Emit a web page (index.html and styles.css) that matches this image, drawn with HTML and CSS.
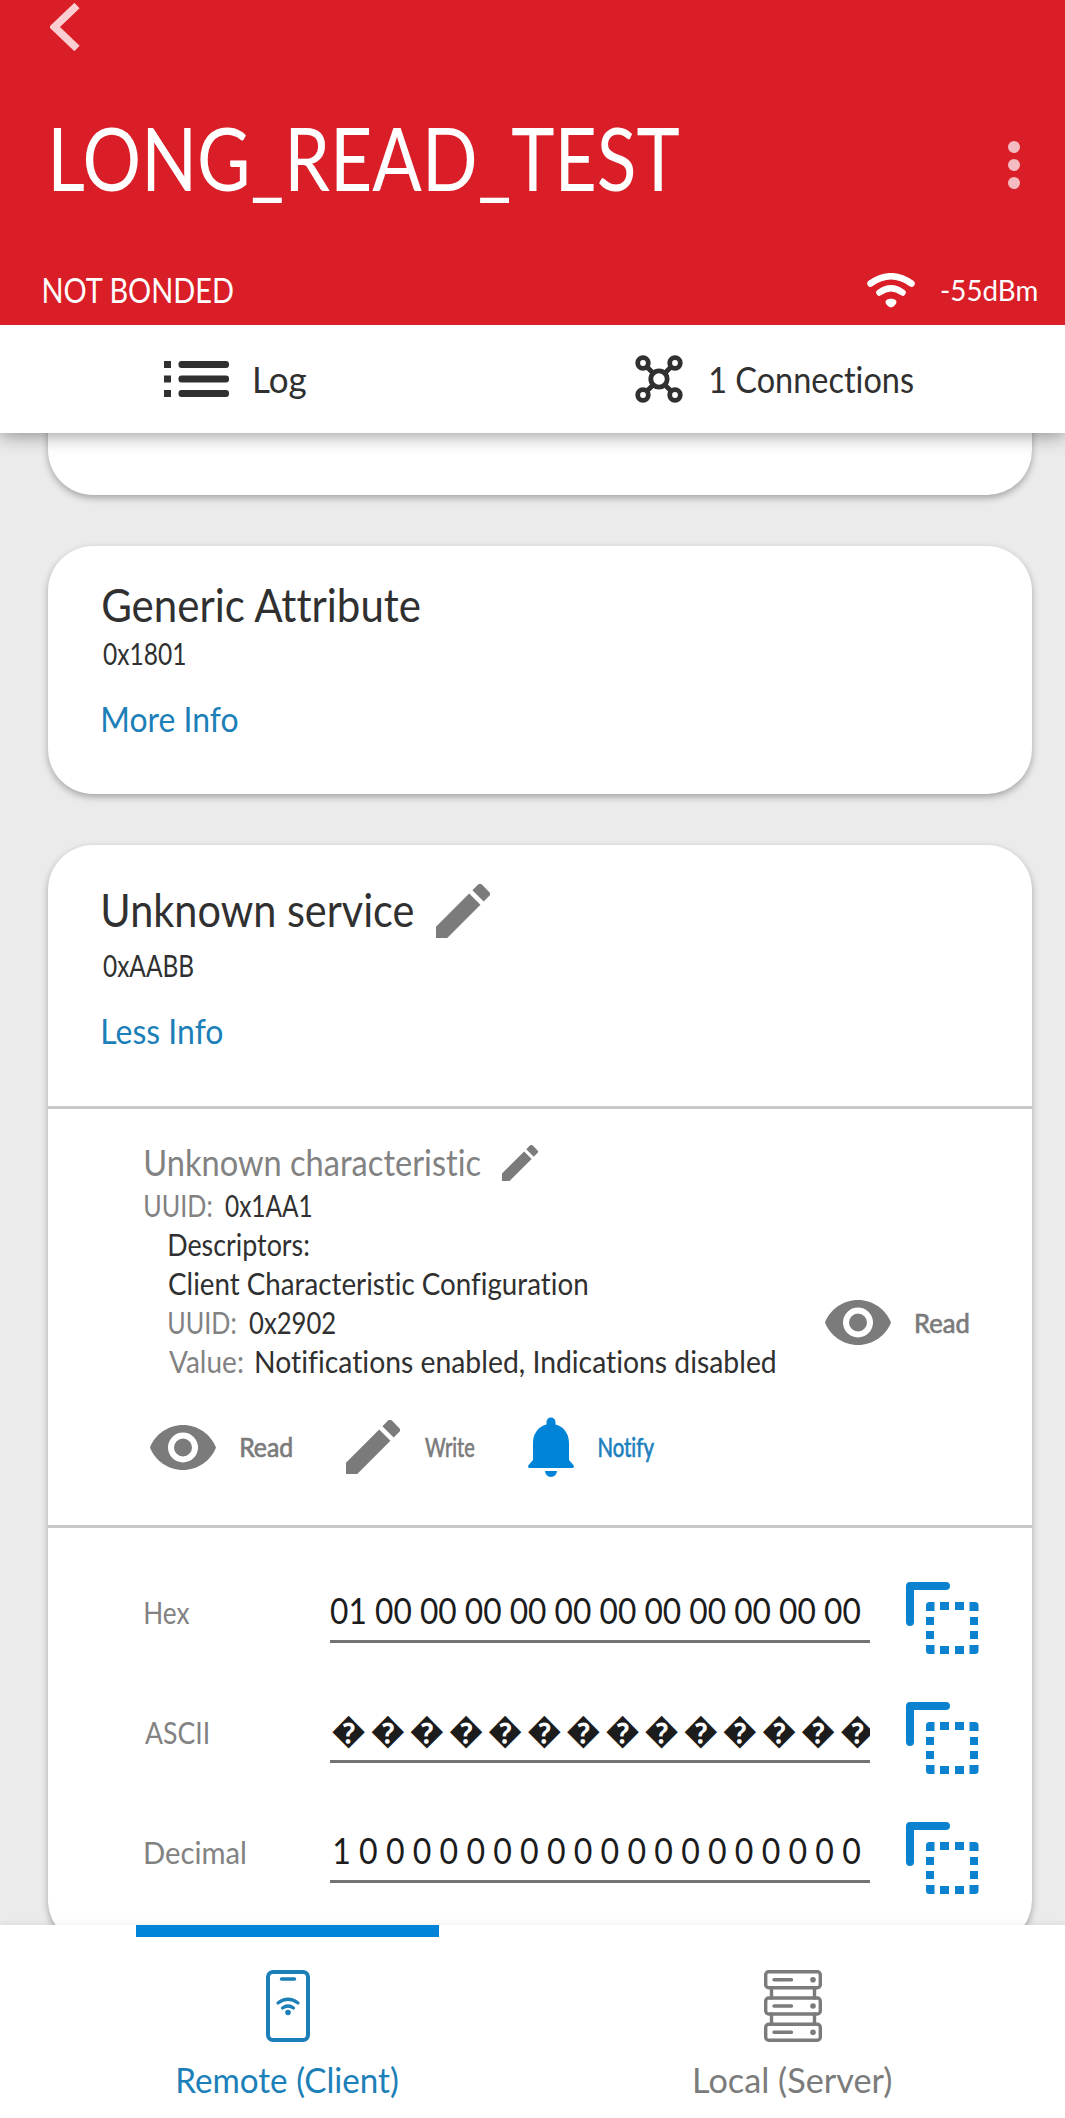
FILE: index.html
```html
<!DOCTYPE html>
<html lang="en">
<head>
<meta charset="utf-8">
<title>LONG_READ_TEST</title>
<link rel="stylesheet" href="styles.css">
</head>
<body>
<svg class="sprite" aria-hidden="true">
  <symbol id="pencil" viewBox="3 3 18 18"><path d="M3 17.25V21h3.75L17.81 9.94l-3.75-3.75L3 17.25zM20.71 7.04a1 1 0 0 0 0-1.41l-2.34-2.34a1 1 0 0 0-1.41 0l-1.83 1.83 3.75 3.75 1.83-1.83z"/></symbol>
  <symbol id="eye" viewBox="1 4.5 22 15"><path d="M12 4.5C7 4.5 2.73 7.61 1 12c1.73 4.39 6 7.5 11 7.5s9.27-3.11 11-7.5c-1.73-4.39-6-7.5-11-7.5zM12 17a5 5 0 1 1 0-10 5 5 0 0 1 0 10zm0-8a3 3 0 1 0 0 6 3 3 0 0 0 0-6z"/></symbol>
  <symbol id="copy" viewBox="0 0 73 72">
    <path d="M4 40V4h36" fill="none" stroke="currentColor" stroke-width="8" stroke-linecap="round" stroke-linejoin="round"/>
    <path d="M20 29v-5.500a3.500 3.500 0 0 1 3.500-3.500H28.500v9zM63.500 20H69a3.500 3.500 0 0 1 3.500 3.500V29h-9zM20 63v5.500a3.500 3.500 0 0 0 3.500 3.500H28.500v-9zM63.500 72H69a3.500 3.500 0 0 0 3.500-3.500V63h-9z"/>
    <path d="M34 20h9v8h-9zM49 20h9v8h-9zM34 64h9v8h-9zM49 64h9v8h-9zM20 35h8v8h-8zM20 49h8v8h-8zM64 35h8v8h-8zM64 49h8v8h-8z"/>
  </symbol>
</svg>
<div class="app">
  <header class="header">
    <svg class="back" width="30" height="48" viewBox="0 0 30 48"><path d="M27 2.500 4.500 24 27 45.500" fill="none" stroke="currentColor" stroke-width="7.500"/></svg>
    <div class="title-row">
      <h1 class="title fit" data-fit="625">LONG_READ_TEST</h1>
      <svg class="more" width="12" height="48" viewBox="0 0 12 48"><circle cx="6" cy="6" r="6"/><circle cx="6" cy="24" r="6"/><circle cx="6" cy="42" r="6"/></svg>
    </div>
    <div class="status-row">
      <span class="bond fit" data-fit="190">NOT BONDED</span>
      <svg class="wifi" width="48" height="35" viewBox="0 0 48 35"><g fill="none" stroke="currentColor" stroke-linecap="round" stroke-width="6.500"><path d="M3.500 10.500Q24-4 44.500 10.500"/><path d="M12.500 19.500Q24 11 35.500 19.500"/></g><path d="M18.500 29c0-4.500 11-4.500 11 0 0 2.500-4 5.500-5.500 5.500s-5.500-3-5.500-5.500z"/></svg>
      <span class="rssi fit" data-fit="96">-55dBm</span>
    </div>
  </header>

  <nav class="toolbar">
    <a class="tool tool-log">
      <svg width="65" height="36" viewBox="0 0 65 36"><path d="M0 0h7v7H0zM0 14.500h7v7H0zM0 29h7v7H0z"/><rect x="14.500" width="50.500" height="7" rx="3"/><rect x="14.500" y="14.500" width="50.500" height="7" rx="3"/><rect x="14.500" y="29" width="50.500" height="7" rx="3"/></svg>
      <span class="fit" data-fit="51">Log</span>
    </a>
    <a class="tool tool-conn">
      <svg width="48" height="48" viewBox="0 0 48 48"><g fill="none" stroke="currentColor" stroke-width="4.800"><path d="M12 12l6 6M36 12l-6 6M12 36l6-6M36 36l-6-6"/><circle cx="8" cy="8" r="5.300"/><circle cx="40" cy="8" r="5.300"/><circle cx="8" cy="40" r="5.300"/><circle cx="40" cy="40" r="5.300"/><circle cx="24" cy="24" r="8.200"/></g></svg>
      <span class="fit" data-fit="204">1 Connections</span>
    </a>
  </nav>

  <main class="services">
    <section class="card">
      <a class="link fit" data-fit="134.500">More Info</a>
    </section>

    <section class="card">
      <h2 class="service-name fit" data-fit="316.500">Generic Attribute</h2>
      <div class="uuid fit" data-fit="82">0x1801</div>
      <a class="link fit" data-fit="134.500">More Info</a>
    </section>

    <section class="card card-open">
      <div class="card-head">
        <div class="name-row">
          <h2 class="service-name fit" data-fit="310">Unknown service</h2>
          <svg class="icon" width="54" height="54"><use href="#pencil"/></svg>
        </div>
        <div class="uuid uuid-open fit" data-fit="90.500">0xAABB</div>
        <a class="link fit" data-fit="119.500">Less Info</a>
      </div>

      <div class="characteristic">
        <div class="char-row">
          <h3 class="char-name fit" data-fit="336.500">Unknown characteristic</h3>
          <svg class="icon" width="36" height="36"><use href="#pencil"/></svg>
        </div>
        <div class="line"><span class="key fit" data-fit="66.500">UUID:</span><span class="fit" data-fit="86.500">0x1AA1</span></div>
        <div class="descriptors">
          <div class="line"><span class="fit" data-fit="139.500">Descriptors:</span></div>
          <div class="descriptor">
            <div class="descriptor-text">
              <div class="line"><span class="fit" data-fit="418.500">Client Characteristic Configuration</span></div>
              <div class="line"><span class="key fit" data-fit="66.500">UUID:</span><span class="fit" data-fit="86">0x2902</span></div>
              <div class="line"><span class="key fit" data-fit="73.500">Value:</span><span class="fit" data-fit="520">Notifications enabled, Indications disabled</span></div>
            </div>
            <div class="action">
              <svg class="icon" width="66" height="45"><use href="#eye"/></svg>
              <span class="fit" data-fit="52">Read</span>
            </div>
          </div>
        </div>
        <div class="actions">
          <div class="action">
            <svg class="icon" width="66" height="45"><use href="#eye"/></svg>
            <span class="fit" data-fit="50.500">Read</span>
          </div>
          <div class="action">
            <svg class="icon" width="54" height="54"><use href="#pencil"/></svg>
            <span class="fit" data-fit="49">Write</span>
          </div>
          <div class="action action-on">
            <svg class="icon" width="46" height="60" viewBox="0 0 46 60"><path d="M18.500 5a4.500 4.500 0 0 1 9 0v2.500C36 9.500 41 17 41 26v17l4 4.500c2 2.500.5 3.500-1.500 3.500h-41C.5 51-1 50 1 47.500L5 43V26C5 17 10 9.500 18.500 7.500zM17 54h12a6 6 0 0 1-12 0z"/></svg>
            <span class="fit" data-fit="55.500">Notify</span>
          </div>
        </div>
      </div>

      <div class="values">
        <div class="value-row">
          <span class="label"><span class="fit" data-fit="44.500">Hex</span></span>
          <div class="field"><span class="fit" data-fit="529">01 00 00 00 00 00 00 00 00 00 00 00</span></div>
          <svg class="copy" width="73" height="72"><use href="#copy"/></svg>
        </div>
        <div class="value-row">
          <span class="label"><span class="fit" data-fit="63">ASCII</span></span>
          <div class="field field-ascii"><span class="fit" data-fit="542">��������������</span></div>
          <svg class="copy" width="73" height="72"><use href="#copy"/></svg>
        </div>
        <div class="value-row">
          <span class="label"><span class="fit" data-fit="100">Decimal</span></span>
          <div class="field field-dec"><span class="fit" data-fit="526">1 0 0 0 0 0 0 0 0 0 0 0 0 0 0 0 0 0 0 0</span></div>
          <svg class="copy" width="73" height="72"><use href="#copy"/></svg>
        </div>
      </div>
    </section>
  </main>

  <nav class="tabs">
    <a class="tab tab-active">
      <svg width="44" height="72" viewBox="0 0 44 72"><g fill="none" stroke="currentColor" stroke-width="4" stroke-linecap="round"><rect x="2" y="2" width="40" height="68" rx="5"/><path d="M15.500 9h13" stroke-width="3.500"/><path d="M12 33q10-7.500 20 0M16.500 38q5.500-4 11 0" stroke-width="3.200"/></g><circle cx="22" cy="42.500" r="2.800"/></svg>
      <span class="fit" data-fit="219.500">Remote (Client)</span>
    </a>
    <a class="tab">
      <svg width="58" height="72" viewBox="0 0 58 72"><g fill="none" stroke="currentColor" stroke-width="3.400" stroke-linecap="round"><rect x="1.700" y="1.700" width="54.600" height="16" rx="3"/><rect x="1.700" y="28" width="54.600" height="16" rx="3"/><rect x="1.700" y="54.300" width="54.600" height="16" rx="3"/><path d="M7.500 18v10M50.500 18v10M7.500 44v10M50.500 44v10M10 9.800h17.500M10 36h17.500M10 62.300h17.500"/></g><circle cx="49" cy="9.800" r="2.800"/><circle cx="49" cy="36" r="2.800"/><circle cx="49" cy="62.300" r="2.800"/></svg>
      <span class="fit" data-fit="196">Local (Server)</span>
    </a>
  </nav>
</div>
<script src="fit.js"></script>
</body>
</html>
```
FILE: styles.css
```css
* { box-sizing: border-box; }
body { margin: 0; font-family: Lato, "Liberation Sans", sans-serif; color: #303030; background: #ebebeb; font-variant-ligatures: none; }
h1, h2, h3 { margin: 0; font-weight: 400; }
svg { display: block; flex: none; fill: currentColor; }
.sprite { position: absolute; width: 0; height: 0; }
.fit { display: block; flex: none; width: max-content; white-space: nowrap; transform-origin: 0 0; }

.app { width: 1065px; height: 2118px; display: flex; flex-direction: column; overflow: hidden; }

.header { height: 325px; flex: none; background: #d91e28; color: #fff; z-index: 3; }
.back { margin-left: 50px; color: #fccdd1; padding-top: 3px; height: 51px; }
.title-row { display: flex; justify-content: space-between; align-items: center; height: 120px; margin-top: 54px; padding: 0 45px 0 54px; }
.title { font-size: 88px; line-height: 106px; margin-top: -17px; }
.more { color: #f4bcc1; }
.status-row { display: flex; align-items: flex-start; padding-left: 44px; margin-top: 40px; }
.bond { font-size: 35.500px; line-height: 50px; }
.wifi { margin: 8px 26px 0 633px; }
.rssi { font-size: 29.500px; line-height: 50px; }

.toolbar { height: 108px; flex: none; display: grid; grid-template-columns: 532px 533px; background: #fff; box-shadow: 0 2px 18px rgba(0, 0, 0, .42); z-index: 2; }
.tool { display: flex; align-items: center; font-size: 36px; line-height: 48px; }
.tool-log { padding-left: 164px; gap: 26px; }
.tool-conn { padding-left: 103px; gap: 27px; }

.services { flex: 1; min-height: 0; overflow: hidden; padding: 0 33px 0 48px; }
.card { height: 248px; padding: 30px 0 0 55px; margin-bottom: 51px; border-radius: 45px; background: #fff; box-shadow: 0 3px 7px rgba(0, 0, 0, .3); }
.card:first-child { margin-top: -186px; padding-top: 100px; }
.card:first-child .link { line-height: 48px; margin-top: 43px; color: #303030; }
.service-name { font-size: 46.500px; line-height: 56px; }
.uuid { font-size: 30.500px; line-height: 39px; margin-top: 2px; }
.link { font-size: 35.500px; line-height: 48px; margin-top: 22px; color: #1c7fb8; }

.card-open { height: 1100px; padding: 0; }
.card-head { height: 261px; padding: 39px 0 0 55px; }
.name-row { display: flex; height: 54px; gap: 23px; }
.name-row .service-name { line-height: 50px; }
.uuid-open { margin-top: 8px; }
.icon { color: #7b7b7b; }

.characteristic { height: 422px; border-top: 3px solid #c8c8c8; border-bottom: 3px solid #c8c8c8; padding: 29px 0 0 97px; }
.char-row { display: flex; gap: 20px; height: 48px; }
.char-row .icon { margin-top: 7px; }
.char-name { font-size: 36px; line-height: 49px; color: #828282; }
.line { display: flex; gap: 13px; font-size: 30px; line-height: 39px; }
.key { color: #828282; }
.descriptors { padding-left: 24px; }
.descriptor { display: flex; }
.descriptor-text { width: 656px; }
.action { display: flex; align-items: center; gap: 25px; font-size: 26.500px; line-height: 36px; color: #7b7b7b; }
.action .fit { -webkit-text-stroke: .7px currentColor; }
.actions { display: flex; height: 60px; margin-top: 36px; padding-left: 5px; gap: 54px; }
.action-on { color: #1c7fc0; }
.action-on .icon { color: #0084d8; }

.values { padding: 30px 0 0 97px; }
.value-row { display: flex; height: 120px; align-items: flex-start; }
.label { width: 185px; padding-top: 35px; font-size: 30px; line-height: 39px; color: #828282; }
.field { width: 540px; height: 85px; border-bottom: 3px solid #747474; padding: 28px 0 0 1px; overflow: hidden; font-size: 36px; line-height: 48px; color: #1c1c1c; }
.field-ascii { font-family: "Noto Sans", "DejaVu Sans", sans-serif; letter-spacing: 4px; padding-left: 2px; }
.field-dec { padding-left: 4px; }
.copy { margin: 24px 0 0 36px; color: #0a82d0; }

.tabs { height: 193px; flex: none; display: flex; gap: 202px; padding-left: 136px; background: #fff; box-shadow: 0 -2px 6px rgba(0, 0, 0, .06); z-index: 2; }
.tab { width: 303px; display: flex; flex-direction: column; align-items: center; border-top: 12px solid transparent; padding-top: 33px; color: #7b7b7b; font-size: 35.500px; line-height: 48px; }
.tab .fit { margin-top: 14px; }
.tab-active { border-color: #0084d8; color: #1c7fb8; }
```
FILE: fit.js
```js
// Condenses each label horizontally so its visible glyphs span data-fit pixels.
const ctx = document.createElement('canvas').getContext('2d');
document.querySelectorAll('.fit').forEach((el) => {
  const cs = getComputedStyle(el);
  const spacing = parseFloat(cs.letterSpacing) || 0;
  ctx.font = `${cs.fontWeight} ${cs.fontSize} ${cs.fontFamily}`;
  const m = ctx.measureText(el.textContent);
  const width = parseFloat(el.dataset.fit);
  const left = -m.actualBoundingBoxLeft;
  const ink = m.actualBoundingBoxRight - left + spacing * (el.textContent.length - 1);
  const scale = width / ink;
  el.style.width = `${width}px`;
  el.style.transform = `translateX(${-left * scale}px) scaleX(${scale})`;
});
```
